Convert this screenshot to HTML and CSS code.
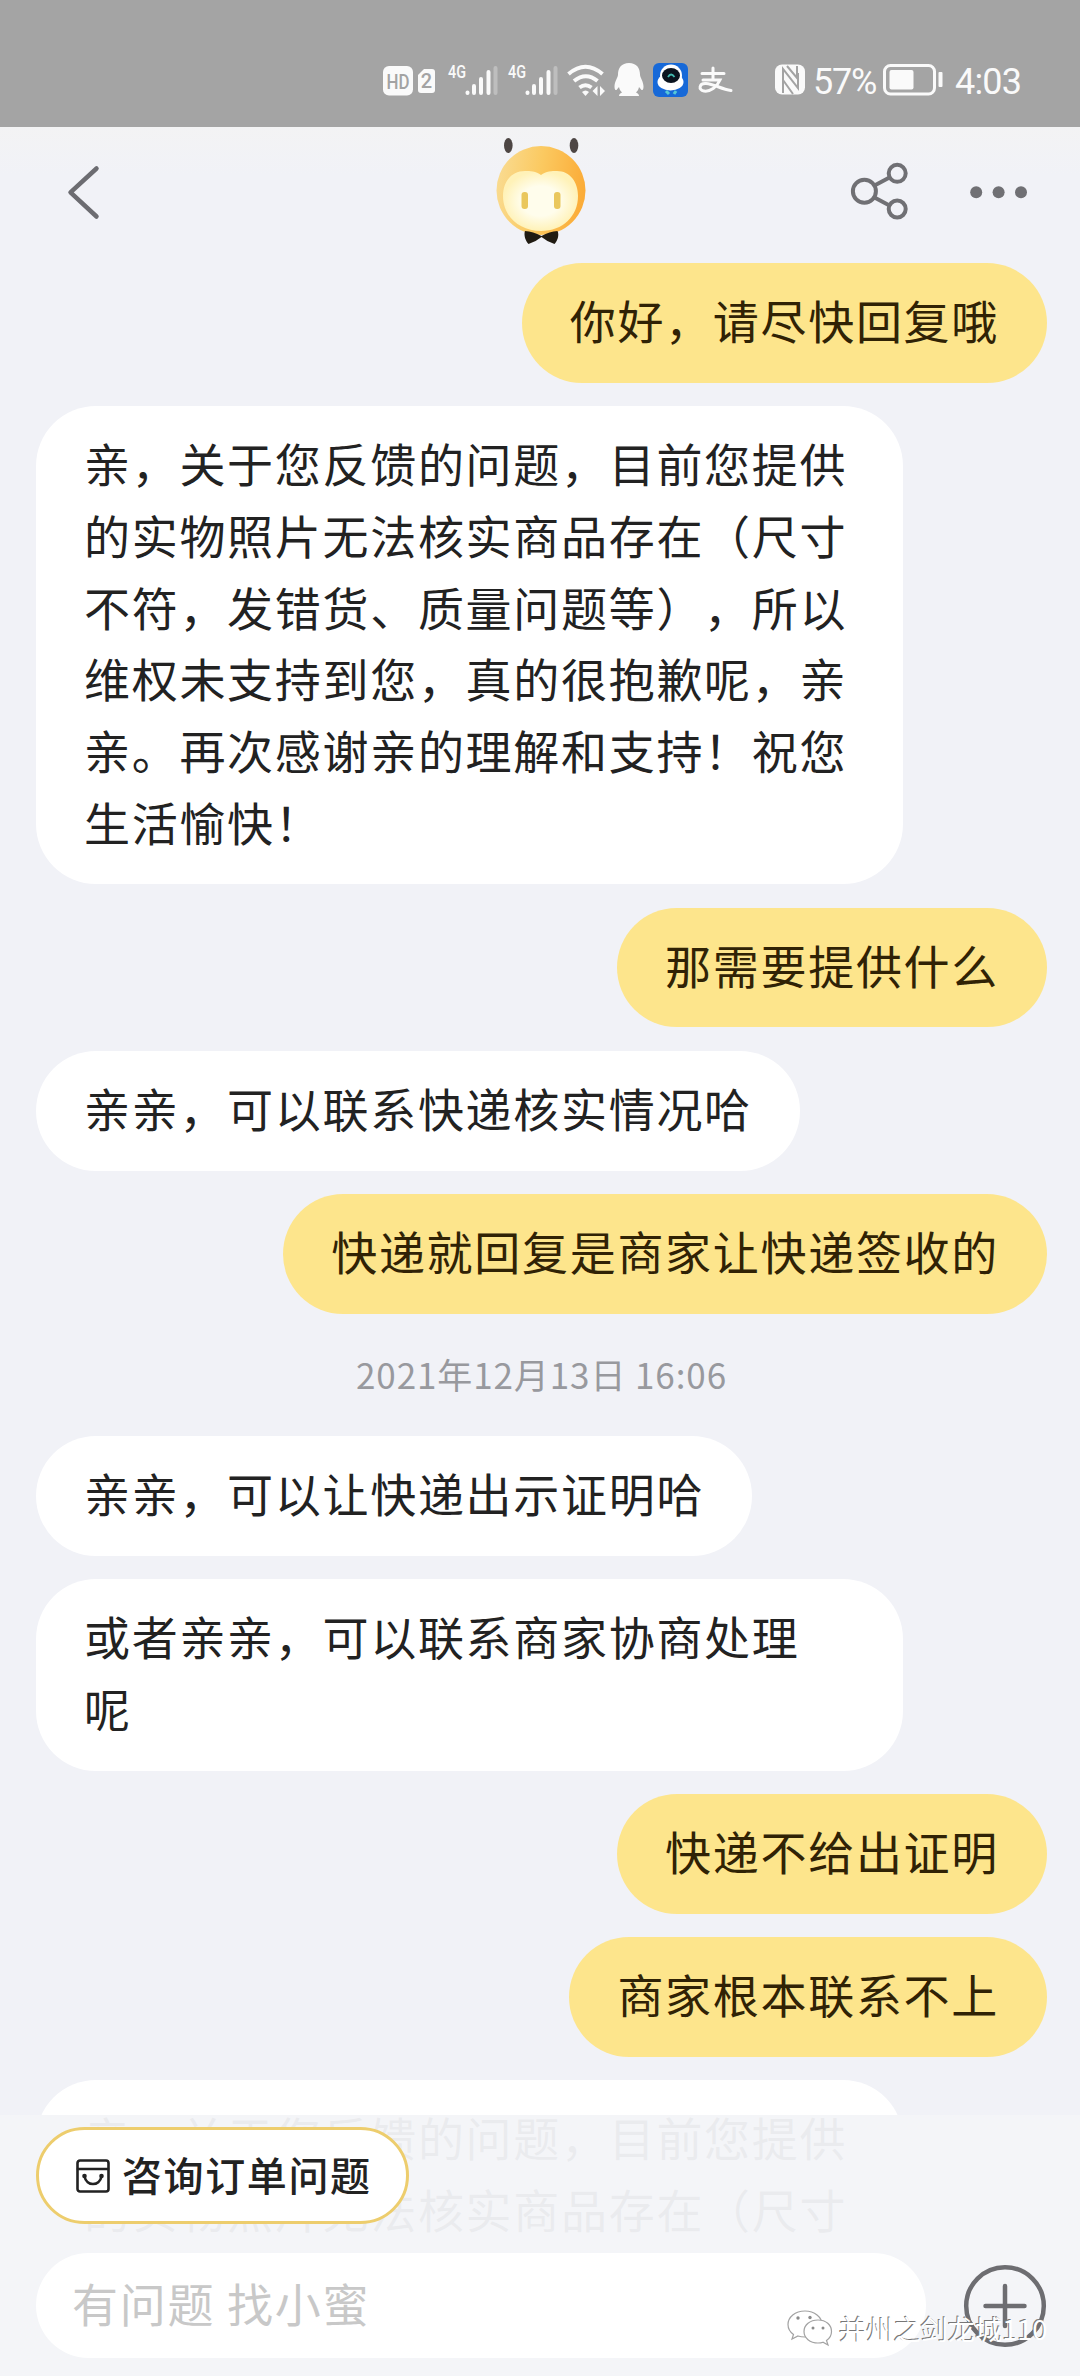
FILE: index.html
```html
<!DOCTYPE html>
<html lang="zh-CN">
<head>
<meta charset="utf-8">
<title>小蜜</title>
<link rel="stylesheet" href="styles.css">
</head>
<body>
<div class="screen">
  <div class="statusbar">
    <svg class="st-sim" width="53" height="34" viewBox="383 63 53 34">
      <rect x="383" y="66" width="30" height="29.500" rx="6" fill="#fafafa"/>
      <text x="398" y="88.500" font-size="21" font-weight="500" text-anchor="middle" textLength="23" lengthAdjust="spacingAndGlyphs" fill="#a3a3a3">HD</text>
      <path d="M424 69h8q3 0 3 3v18q0 3-3 3h-11q-3 0-3-3V75z" fill="#fafafa"/>
      <text x="426.500" y="88" font-size="20" font-weight="500" text-anchor="middle" fill="#a3a3a3">2</text>
    </svg>
    <svg class="st-signal" width="50" height="34" viewBox="448 63 50 34">
      <text x="448" y="78" font-size="19" font-weight="500" textLength="18" lengthAdjust="spacingAndGlyphs" fill="#fafafa">4G</text>
      <g stroke="#fafafa" stroke-width="4" stroke-linecap="round"><path d="M467.500 92.500v.5M474 86v7M481 79v14M488.500 72v21"/><path d="M495.500 68v25" opacity=".3"/></g>
    </svg>
    <svg class="st-signal2" width="50" height="34" viewBox="448 63 50 34">
      <text x="448" y="78" font-size="19" font-weight="500" textLength="18" lengthAdjust="spacingAndGlyphs" fill="#fafafa">4G</text>
      <g stroke="#fafafa" stroke-width="4" stroke-linecap="round"><path d="M467.500 92.500v.5M474 86v7M481 79v14M488.500 72v21"/><path d="M495.500 68v25" opacity=".3"/></g>
    </svg>
    <svg class="st-wifi" width="38" height="34" viewBox="567 63 38 34">
      <g fill="none" stroke="#fafafa" stroke-width="4"><path d="M568.500 74q17-14.500 34 0M574 81q12-9.500 23.500 0M579.500 87.500q6-4.500 12 0"/></g>
      <path d="M582 92q3.500-3 7 0l-3.500 4zM597.500 86v10l-5-5zM600 86v10l5-5z" fill="#fafafa"/>
    </svg>
    <svg class="st-qq" width="30" height="34" viewBox="614 63 30 34">
      <path d="M629 63c-7.500 0-11 5-11 11.500 0 3-3.500 7-3.500 12 0 3 1 4 2 3.500l2.500-3c.5 2.500 1.500 4 3 5.500-2 1-3 2-3 3.500h20c0-1.500-1-2.500-3-3.500 1.500-1.500 2.500-3 3-5.500l2.500 3c1 .5 2-.5 2-3.500 0-5-3.500-9-3.500-12C640 68 636.500 63 629 63z" fill="#fafafa"/>
    </svg>
    <svg class="st-bot" width="35" height="34" viewBox="653 63 35 34">
      <rect x="653" y="63" width="35" height="34" rx="6" fill="#1769d8"/>
      <ellipse cx="670.500" cy="82" rx="13" ry="8.500" fill="#fff"/>
      <circle cx="671" cy="75.500" r="11" fill="#fff"/>
      <ellipse cx="671" cy="75.500" rx="9" ry="7.500" fill="#0b1420"/>
      <path d="M668 77q3-5 6.500 0" fill="none" stroke="#42b8b0" stroke-width="1.800"/>
      <path d="M666 91l3 3M676 91l-2 3" stroke="#57c8d7" stroke-width="3"/>
    </svg>
    <svg class="st-pay" width="35" height="34" viewBox="698 63 35 34">
      <g fill="none" stroke="#fafafa" stroke-width="3" stroke-linecap="round"><path d="M702 73.500h22M713 68v11M703 80h17c-3 7-10 12-16 11-6-1-5-8 2-7.500 8 .5 15 5.500 25 7"/></g>
    </svg>
    <svg class="st-nfc" width="31" height="34" viewBox="775 63 31 34">
      <rect x="775" y="64.500" width="30" height="30" rx="7" fill="#fafafa"/>
      <path d="M783 93V69l15 19V73M787 66l10 12V66M783 80l10 14" fill="none" stroke="#a3a3a3" stroke-width="2"/>
    </svg>
    <span class="st-percent">57%</span>
    <svg class="st-battery" width="61" height="34" viewBox="883 63 61 34">
      <rect x="884.500" y="65.500" width="50" height="28.500" rx="6" fill="none" stroke="#fafafa" stroke-width="3"/>
      <rect x="889.500" y="70" width="24" height="19.500" rx="2" fill="#fafafa"/>
      <rect x="938.500" y="72" width="4" height="15" rx="1" fill="#fafafa"/>
    </svg>
    <span class="st-time">4:03</span>
  </div>

  <header class="navbar">
    <svg class="nav-back" width="40" height="60" viewBox="64 162 40 60"><path d="M96.500 168.500L70.500 192.300L96.500 216.500" fill="none" stroke="#6c6c71" stroke-width="4.500" stroke-linecap="round" stroke-linejoin="round"/></svg>
    <svg class="nav-avatar" width="100" height="110" viewBox="491 136 100 110">
      <defs>
        <linearGradient id="head" x1="0" y1=".2" x2="1" y2=".35"><stop offset="0" stop-color="#f9dc93"/><stop offset=".5" stop-color="#fbc960"/><stop offset="1" stop-color="#fbac38"/></linearGradient>
        <radialGradient id="face"><stop offset=".5" stop-color="#fffdec"/><stop offset="1" stop-color="#fff2b8"/></radialGradient>
      </defs>
      <ellipse cx="508.300" cy="145.500" rx="4.300" ry="7.500" fill="#4d4644"/>
      <ellipse cx="574" cy="145.500" rx="4.300" ry="7.500" fill="#4d4644"/>
      <circle cx="541" cy="190.500" r="44.500" fill="url(#head)"/>
      <path d="M541 175c-5-4-11-4-16-4-14 0-22 11-22 25 0 20 16 35 38 35s37-15 37-35c0-14-8-25-21-25-5 0-11 0-16 4z" fill="url(#face)"/>
      <rect x="521.500" y="192" width="6.500" height="17" rx="3" fill="#eac75c"/>
      <rect x="554" y="192" width="6.500" height="17" rx="3" fill="#eac75c"/>
      <path d="M525 231q8 .5 16.500 5 8-4.500 16-5c2 4 0 10-3 13q-7-2-13-7-6 5-13 7c-3-3-5-9-3.500-13z" fill="#201b12"/>
    </svg>
    <svg class="nav-share" width="62" height="64" viewBox="849 161 62 64">
      <g fill="none" stroke="#707074" stroke-width="4"><circle cx="864.400" cy="192.300" r="11.500"/><circle cx="897.200" cy="174.300" r="8.500"/><circle cx="897.200" cy="210" r="8.500"/><path d="M874.500 186.500L889.500 178.500M874.500 198.500L889.500 206.500"/></g>
    </svg>
    <svg class="nav-more" width="60" height="20" viewBox="969 182 60 20"><g fill="#707074"><circle cx="976.200" cy="192.300" r="6"/><circle cx="998.600" cy="192.300" r="6"/><circle cx="1021" cy="192.300" r="6"/></g></svg>
  </header>

  <main class="chat">
    <div class="bubble mine">你好，请尽快回复哦</div>
    <div class="bubble theirs long">亲，关于您反馈的问题，目前您提供<br>的实物照片无法核实商品存在（尺寸<br>不符，发错货、质量问题等），所以<br>维权未支持到您，真的很抱歉呢，亲<br>亲。再次感谢亲的理解和支持！祝您<br>生活愉快！</div>
    <div class="bubble mine">那需要提供什么</div>
    <div class="bubble theirs">亲亲，可以联系快递核实情况哈</div>
    <div class="bubble mine">快递就回复是商家让快递签收的</div>
    <div class="date">2021年12月13日 16:06</div>
    <div class="bubble theirs">亲亲，可以让快递出示证明哈</div>
    <div class="bubble theirs long">或者亲亲，可以联系商家协商处理<br>呢</div>
    <div class="bubble mine">快递不给出证明</div>
    <div class="bubble mine">商家根本联系不上</div>
    <div class="bubble theirs long">亲，关于您反馈的问题，目前您提供<br>的实物照片无法核实商品存在（尺寸</div>
  </main>

  <footer class="composer">
    <div class="chip">
      <svg width="34" height="34" viewBox="0 0 34 34"><g fill="none" stroke="#222" stroke-width="2.600" stroke-linecap="round"><rect x="1.500" y="1.500" width="31" height="31" rx="2.500"/><path d="M2 10h30M8.500 17.500c2 10 15 10 17 0"/></g><circle cx="8.500" cy="17" r="2.300" fill="#222"/><circle cx="25.500" cy="17" r="2.300" fill="#222"/></svg>
      <span>咨询订单问题</span>
    </div>
    <div class="entry">
      <div class="field">有问题 找小蜜</div>
      <svg width="84" height="84" viewBox="0 0 84 84"><g fill="none" stroke="#6d6d71" stroke-width="4.500" stroke-linecap="round"><circle cx="42" cy="42" r="38.800"/><path d="M42 22v40M22.500 42h39"/></g></svg>
    </div>
  </footer>

  <div class="watermark">
    <svg width="47" height="37" viewBox="0 0 47 37"><g fill="#fff" stroke="#a2a2a2" stroke-width="1.200"><path d="M18 1C8 1 1 7 1 14.500c0 4 2 7.500 5.500 10L5 29l6-3q3 1 7 1c9 0 17-5 17-12.500S27.500 1 18 1z"/><path d="M31 10c-8 0-14 5-14 11.500S23 33 31 33q3 0 5-.8l5 2.800-1.500-4.500c3-2 5-5 5-9C44.500 15 39 10 31 10z"/></g><g fill="#8b8b8b"><circle cx="11" cy="8" r="1.700"/><circle cx="23" cy="7.500" r="1.700"/><circle cx="26" cy="18" r="1.500"/><circle cx="36" cy="18" r="1.500"/></g></svg>
    <span>并州之剑龙城110</span>
  </div>
</div>
</body>
</html>
```

FILE: styles.css
```css
* { box-sizing: border-box; }

body {
  margin: 0;
  background: #f1f2f7;
  font-family: "Noto Sans CJK SC", sans-serif;
  text-spacing-trim: space-all;
}

svg { display: block; flex: none; overflow: visible; }

.screen {
  position: relative;
  display: flex;
  flex-direction: column;
  width: 1080px;
  height: 2376px;
  overflow: hidden;
}

/* Status bar */
.statusbar {
  flex: none;
  display: flex;
  align-items: center;
  height: 127px;
  padding: 33px 0 0 383px;
  background: #a4a4a4;
  color: #fafafa;
  font: 36px/34px Roboto, sans-serif;
}
.statusbar text { font-family: Roboto, sans-serif; }
.st-signal { margin-left: 12px; }
.st-signal2 { margin-left: 10px; }
.st-wifi { margin-left: 9px; }
.st-qq { margin-left: 9px; }
.st-bot { margin-left: 9px; }
.st-pay { margin-left: 10px; }
.st-nfc { margin-left: 42px; }
.st-percent { width: 69px; margin-left: 7px; letter-spacing: -1.2px; padding-top: 3px; }
.st-battery { margin-left: 1px; }
.st-time { margin-left: 11px; padding-top: 3px; letter-spacing: -0.8px; }

/* Navigation */
.navbar {
  flex: none;
  display: grid;
  grid-template-columns: 491px 100px 1fr auto 58px auto;
  align-items: center;
  height: 136px;
  padding: 0 51px 6px 0;
  background: linear-gradient(#f3f3f4, #f1f2f7 35%);
}
.nav-back { margin-left: 64px; }
.nav-avatar { align-self: start; margin-top: 9px; }
.nav-share { grid-column: 4; }
.nav-more { grid-column: 6; }

/* Conversation */
.chat {
  flex: 1;
  min-height: 0;
  display: flex;
  flex-direction: column;
  gap: 23.4px;
  padding: 0 33px 0 36px;
  overflow: hidden;
}
.bubble {
  flex: none;
  padding: 21px 48px 27px;
  border-radius: 60px;
  font-size: 46px;
  line-height: 71.7px;
  letter-spacing: 1.7px;
  white-space: nowrap;
}
.theirs { align-self: flex-start; background: #fff; color: #222; }
.mine { align-self: flex-end; background: #fde58c; color: #302205; }
.long { width: 867px; }
.date {
  flex: none;
  height: 76px;
  color: #98999e;
  font-size: 35px;
  line-height: 74px;
  letter-spacing: 0.9px;
  text-align: center;
}

/* Composer laid over the end of the conversation */
.composer {
  position: absolute;
  left: 0;
  right: 0;
  bottom: 0;
  height: 261px;
  padding: 12px 33px 0 36px;
  background: rgba(244, 245, 248, 0.955);
}
.chip {
  display: flex;
  align-items: center;
  gap: 12px;
  width: 373px;
  height: 97px;
  padding-left: 37px;
  border: 3px solid #edcd6d;
  border-radius: 49px;
  background: #fff;
  color: #222;
  font-size: 40px;
  font-weight: 500;
  line-height: 60px;
  letter-spacing: 1.6px;
  white-space: nowrap;
}
.chip span { padding-bottom: 3px; }
.entry {
  display: flex;
  align-items: center;
  justify-content: space-between;
  margin-top: 29px;
}
.field {
  width: 890px;
  height: 105px;
  padding-left: 36px;
  border-radius: 53px;
  background: #fff;
  color: #c8c8c8;
  font-size: 46px;
  line-height: 99px;
  letter-spacing: 1.7px;
}

.watermark {
  position: absolute;
  left: 787px;
  top: 2309px;
  display: flex;
  align-items: center;
  gap: 5px;
  color: #fff;
  font-size: 27.2px;
  line-height: 38px;
  text-shadow: -1px -1px 0 #777;
  white-space: nowrap;
}
```
